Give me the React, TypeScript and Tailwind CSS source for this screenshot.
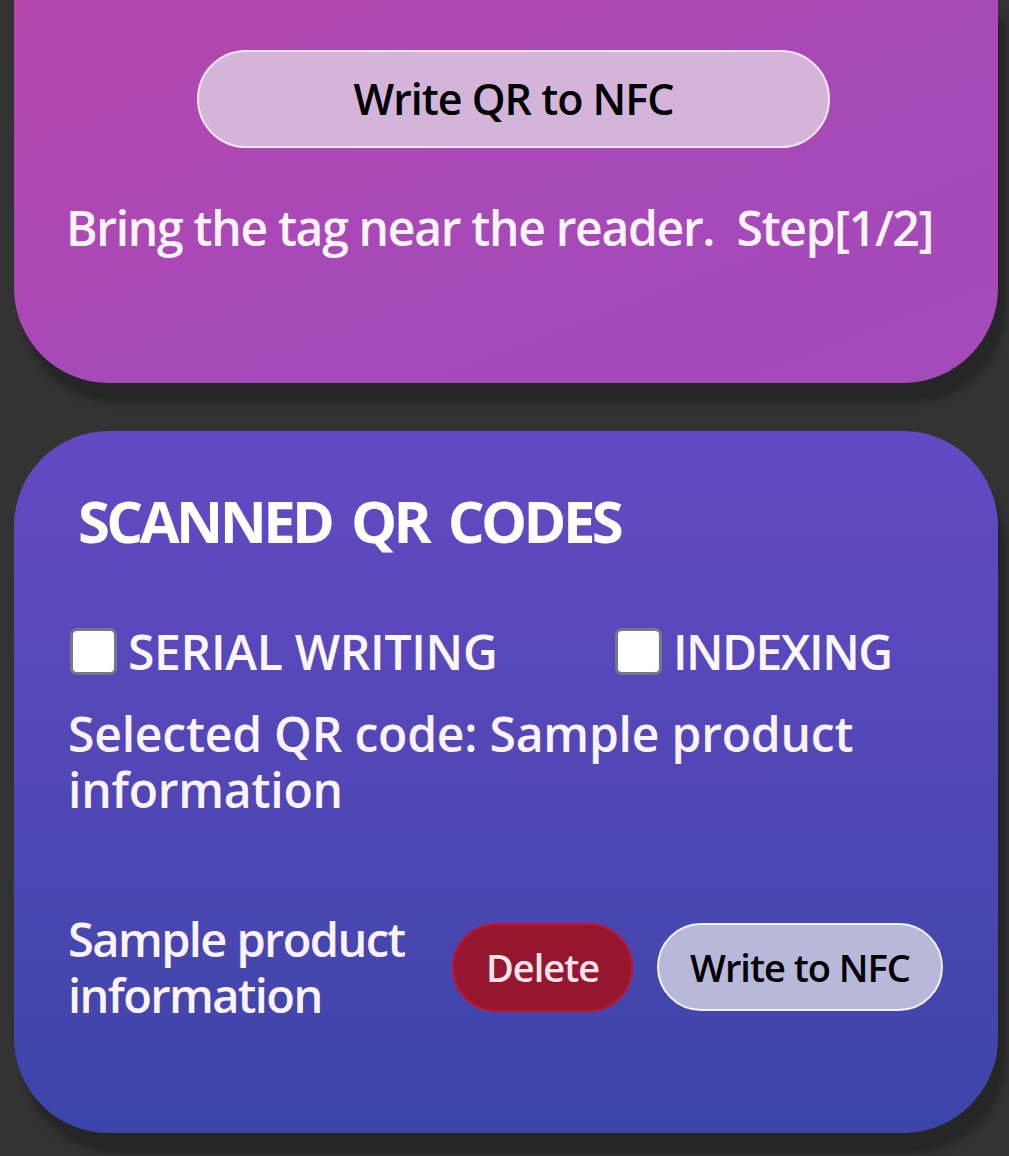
import React from "react";

const font = { fontFamily: '"Open Sans", "Liberation Sans", sans-serif' };

function Checkbox({ label, tracking }: { label: string; tracking: string }) {
  return (
    <label className="flex items-center gap-[11px]">
      <span className="w-[47px] h-[47px] rounded-[7px] bg-white border-[3px] border-[#77778a] shrink-0" />
      <span className={`text-[48px] font-semibold text-[#fdf6fd] leading-[47px] ${tracking}`}>{label}</span>
    </label>
  );
}

export default function App() {
  return (
    <div className="min-h-[1156px] w-[1009px] bg-[#333333] pl-[14px] pr-[11px] pb-[24px]" style={font}>
      {/* NFC card */}
      <div className="h-[383px] rounded-b-[95px] bg-gradient-to-br from-[#b547ac] via-[#a849b8] to-[#a54ab9] shadow-[8px_20px_6px_#262626] flex flex-col pt-[50px]">
        <button className="ml-[183px] w-[633px] h-[98px] rounded-full bg-[#d4b5d9] border-2 border-[#f4e6f4] text-black text-[43px] font-semibold tracking-[-1px]">
          Write QR to NFC
        </button>
        <p className="mt-[56px] pl-[52px] text-[48px] leading-none font-semibold text-[#fdf3fd] tracking-[-1.3px] whitespace-pre">
          {"Bring the tag near the reader.  Step[1/2]"}
        </p>
      </div>

      {/* Scanned codes card */}
      <div className="mt-[48px] h-[702px] rounded-[95px] bg-gradient-to-b from-[#6549c4] to-[#3b45a8] shadow-[8px_20px_6px_#262626] pl-[54px] pr-[40px] pt-[61px]">
        <h2 className="pl-[10px] text-[58px] font-bold text-white tracking-[-3.6px] [word-spacing:8px] leading-none">
          SCANNED QR CODES
        </h2>

        <div className="mt-[78px] flex pl-[2px]">
          <div className="w-[545px]">
            <Checkbox label="SERIAL WRITING" tracking="tracking-[-0.3px]" />
          </div>
          <Checkbox label="INDEXING" tracking="tracking-[-1.6px]" />
        </div>

        <p className="mt-[31px] text-[48px] font-semibold text-[#fdf3fd] tracking-[-0.2px] leading-[56px] w-[880px]">
          Selected QR code: Sample product information
        </p>

        <div className="mt-[93px] flex items-center">
          <p className="w-[384px] text-[47px] font-semibold text-[#fdf3fd] tracking-[-1.6px] leading-[56px]">
            Sample product information
          </p>
          <button className="w-[181px] h-[89px] rounded-full bg-[#94162f] border-2 border-[#c8112c] text-[#fbe4ec] text-[38px] font-semibold tracking-[-1px]">
            Delete
          </button>
          <button className="ml-[24px] w-[286px] h-[88px] rounded-full bg-[#b8b8da] border-2 border-[#f4f4ff] text-black text-[38px] font-semibold tracking-[-1px]">
            Write to NFC
          </button>
        </div>
      </div>
    </div>
  );
}
